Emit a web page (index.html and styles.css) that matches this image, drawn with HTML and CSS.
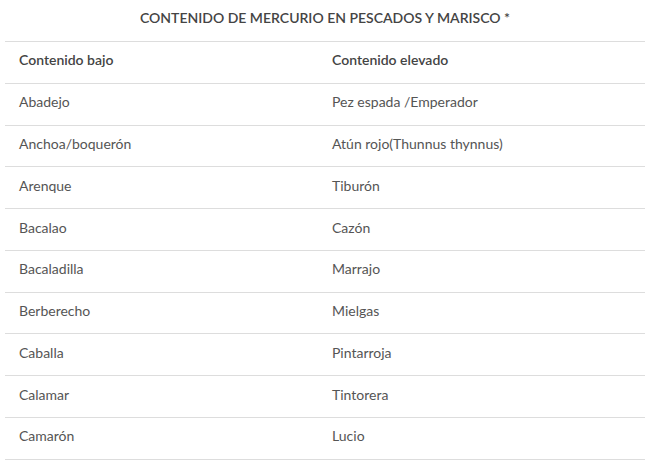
FILE: index.html
```html
<!DOCTYPE html>
<html lang="es">
<head>
<meta charset="utf-8">
<link rel="stylesheet" href="styles.css">
</head>
<body>
<div class="wrap">
  <h3 class="title">CONTENIDO DE MERCURIO EN PESCADOS Y MARISCO *</h3>
  <table class="tbl">
    <colgroup><col class="c1"><col class="c2"></colgroup>
    <thead>
      <tr><th>Contenido bajo</th><th>Contenido elevado</th></tr>
    </thead>
    <tbody>
      <tr><td>Abadejo</td><td>Pez espada /Emperador</td></tr>
      <tr><td>Anchoa/boquerón</td><td>Atún rojo(Thunnus thynnus)</td></tr>
      <tr><td>Arenque</td><td>Tiburón</td></tr>
      <tr><td>Bacalao</td><td>Cazón</td></tr>
      <tr><td>Bacaladilla</td><td>Marrajo</td></tr>
      <tr><td>Berberecho</td><td>Mielgas</td></tr>
      <tr><td>Caballa</td><td>Pintarroja</td></tr>
      <tr><td>Calamar</td><td>Tintorera</td></tr>
      <tr><td>Camarón</td><td>Lucio</td></tr>
    </tbody>
  </table>
</div>
</body>
</html>
```
FILE: styles.css
```css
html, body {
  margin: 0;
  padding: 0;
  background: #fff;
}
body {
  font-family: Lato, "Open Sans", sans-serif;
  font-size: 14px;
  color: #555;
}
.wrap {
  width: 640px;
  padding: 8px 15px 0 5px;
}
.title {
  margin: 0 0 13px;
  font-size: 14px;
  line-height: 20px;
  font-weight: 600;
  color: #444;
  text-align: center;
}
.tbl {
  width: 640px;
  border-collapse: collapse;
  table-layout: fixed;
}
.c1 { width: 313px; }
.c2 { width: 327px; }
.tbl th,
.tbl td {
  text-align: left;
  padding: 8.4px 14px 12.4px;
  line-height: 20px;
  border-top: 1px solid #ddd;
  vertical-align: top;
}
.tbl tbody tr:last-child td {
  border-bottom: 1px solid #ddd;
}
.tbl th {
  font-weight: 600;
  color: #444;
}
```
